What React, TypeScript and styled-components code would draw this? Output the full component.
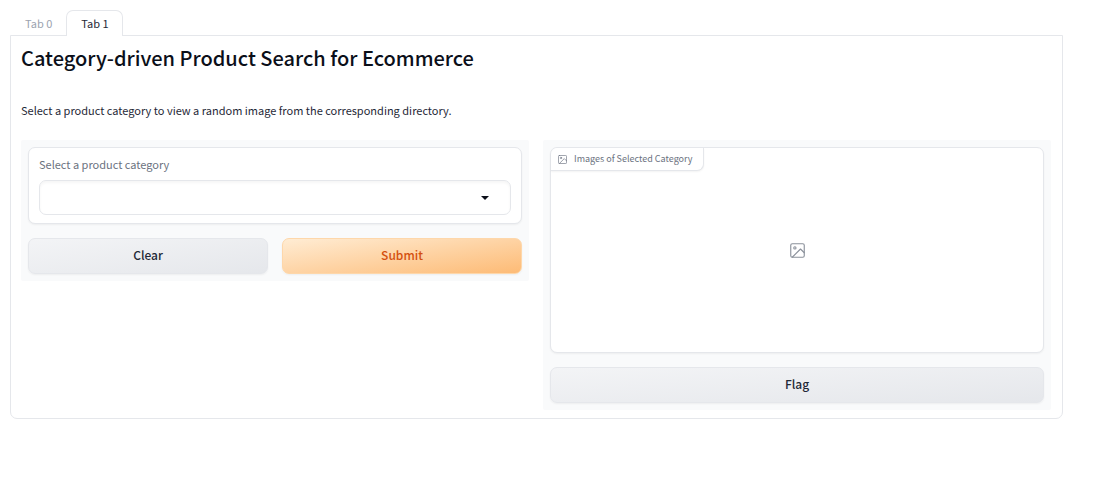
import React from "react";
import styled, { createGlobalStyle, css } from "styled-components";

const line = "#e5e7eb";

const GlobalStyle = createGlobalStyle`
  *, *::before, *::after { box-sizing: border-box; }
  body {
    margin: 0;
    background: #fff;
    color: #1f2937;
    font-family: "Noto Sans CJK SC", "Noto Sans", sans-serif;
    font-size: 11px;
    line-height: 20px;
  }
  button, select { font: inherit; color: inherit; }
`;

const Page = styled.main`
  padding: 10px 37px 24px 10px;
`;

const TabList = styled.div`
  display: flex;
  height: 26px;
  margin-bottom: -1px;
`;

const Tab = styled.button<{ $active?: boolean }>`
  position: relative;
  height: 26px;
  padding: 0 13px 2px 14px;
  border: 1px solid transparent;
  border-bottom: 0;
  border-radius: 7px 7px 0 0;
  background: transparent;
  color: #9ca3af;
  cursor: pointer;
  ${({ $active }) =>
    $active &&
    css`
      border-color: ${line};
      background: #fff;
      color: #1f2937;
    `}
`;

const Panel = styled.section`
  padding: 7px 11px 8px 10px;
  border: 1px solid ${line};
  border-radius: 0 0 7px 7px;
`;

const Title = styled.h1`
  margin: 0 0 27px;
  color: #0b0f19;
  font-size: 20px;
  font-weight: 500;
  line-height: 30px;
`;

const Intro = styled.p`
  margin: 0 0 20px;
  color: #1f2937;
`;

const Columns = styled.div`
  display: grid;
  grid-template-columns: 1fr 1fr;
  align-items: start;
  gap: 14px;
`;

const Group = styled.div`
  display: flex;
  flex-direction: column;
  gap: 14px;
  padding: 7px;
  border-radius: 2px;
  background: #f9fafb;
`;

const Block = styled.div`
  position: relative;
  border: 1px solid ${line};
  border-radius: 7px;
  background: #fff;
  box-shadow: 0 1px 2px rgba(0, 0, 0, 0.05);
`;

const Field = styled(Block)`
  display: flex;
  flex-direction: column;
  gap: 6px;
  padding: 6px 10px 8px;
`;

const FieldLabel = styled.label`
  color: #6b7280;
`;

const SelectWrap = styled.div`
  position: relative;
`;

const Select = styled.select`
  display: block;
  width: 100%;
  height: 35px;
  padding: 0 36px 0 10px;
  border: 1px solid ${line};
  border-radius: 7px;
  background: #fff;
  box-shadow: inset 0 2px 3px rgba(0, 0, 0, 0.04);
  appearance: none;
`;

const Caret = styled.svg`
  position: absolute;
  top: 16px;
  right: 22px;
  width: 8px;
  height: 4px;
  pointer-events: none;
`;

const Actions = styled.div`
  display: grid;
  grid-template-columns: 1fr 1fr;
  gap: 14px;
`;

const Button = styled.button<{ $primary?: boolean }>`
  height: 36px;
  padding: 0 14px 2px;
  border: 1px solid ${({ $primary }) => ($primary ? "#fed7aa" : line)};
  border-radius: 7px;
  background: ${({ $primary }) =>
    $primary
      ? "linear-gradient(to bottom right, #ffedd5, #fdba74) border-box"
      : "linear-gradient(to bottom right, #f3f4f6, #e5e7eb) border-box"};
  box-shadow: 0 1px 2px rgba(0, 0, 0, 0.05);
  color: ${({ $primary }) => ($primary ? "#d4500f" : "#1f2937")};
  font-size: 12px;
  font-weight: 500;
  cursor: pointer;
`;

const ImageBlock = styled(Block)`
  display: flex;
  align-items: center;
  justify-content: center;
  height: 206px;
  color: #8b919b;
`;

const Badge = styled.div`
  position: absolute;
  top: 0;
  left: 0;
  display: flex;
  align-items: center;
  gap: 7px;
  height: 23px;
  padding: 0 11px 0 7px;
  border-right: 1px solid ${line};
  border-bottom: 1px solid ${line};
  border-radius: 7px 0;
  background: #fff;
  box-shadow: 0 1px 2px rgba(0, 0, 0, 0.05);
  color: #6b7280;
  font-size: 9px;
`;

function ImageIcon({ size }: { size: number }) {
  return (
    <svg
      width={size}
      height={size}
      viewBox="2 2 20 20"
      fill="none"
      stroke="currentColor"
      strokeWidth="1.5"
      strokeLinecap="round"
      strokeLinejoin="round"
      aria-hidden="true"
    >
      <rect x="3" y="3" width="18" height="18" rx="2" />
      <circle cx="8.5" cy="8.5" r="1.5" />
      <polyline points="21 15 16 10 5 21" />
    </svg>
  );
}

export default function App() {
  return (
    <>
      <GlobalStyle />
      <Page>
        <TabList role="tablist">
          <Tab type="button" role="tab" aria-selected={false}>
            Tab 0
          </Tab>
          <Tab type="button" role="tab" aria-selected $active>
            Tab 1
          </Tab>
        </TabList>
        <Panel role="tabpanel">
          <Title>Category-driven Product Search for Ecommerce</Title>
          <Intro>
            Select a product category to view a random image from the
            corresponding directory.
          </Intro>
          <Columns>
            <Group>
              <Field>
                <FieldLabel htmlFor="category">
                  Select a product category
                </FieldLabel>
                <SelectWrap>
                  <Select id="category" defaultValue="">
                    <option value="" />
                  </Select>
                  <Caret viewBox="0 0 8 4" aria-hidden="true">
                    <path d="M0 0H8L4 4Z" fill="#0b0f19" />
                  </Caret>
                </SelectWrap>
              </Field>
              <Actions>
                <Button type="button">Clear</Button>
                <Button type="button" $primary>
                  Submit
                </Button>
              </Actions>
            </Group>
            <Group>
              <ImageBlock>
                <Badge>
                  <ImageIcon size={9} />
                  Images of Selected Category
                </Badge>
                <ImageIcon size={15} />
              </ImageBlock>
              <Button type="button">Flag</Button>
            </Group>
          </Columns>
        </Panel>
      </Page>
    </>
  );
}
